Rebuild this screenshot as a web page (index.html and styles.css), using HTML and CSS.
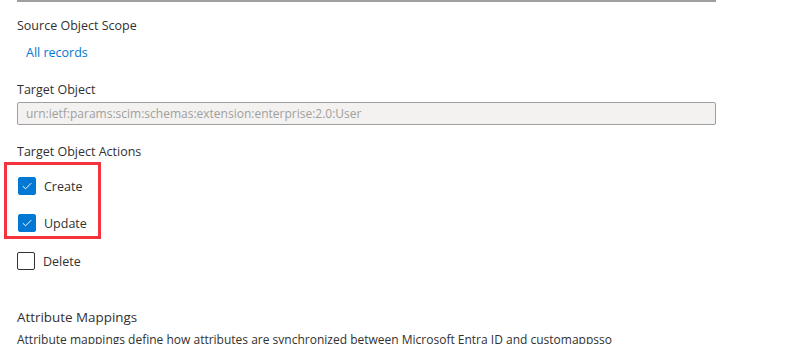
FILE: index.html
```html
<!DOCTYPE html>
<html lang="en">
<head>
    <meta charset="UTF-8">
    <meta name="viewport" content="width=device-width, initial-scale=1.0">
    <title>Edit Attribute Mapping</title>
    <link rel="stylesheet" href="styles.css">
</head>
<body>
    <div class="page">
        <div class="top-rule"></div>

        <div class="field">
            <div class="label">Source Object Scope</div>
            <a class="link" href="#">All records</a>
        </div>

        <div class="field">
            <div class="label">Target Object</div>
            <input class="text-input" type="text" value="urn:ietf:params:scim:schemas:extension:enterprise:2.0:User" disabled>
        </div>

        <div class="field actions">
            <div class="label">Target Object Actions</div>
            <div class="highlight">
                <label class="check">
                    <span class="box checked">
                        <svg width="12" height="12" viewBox="0 0 12 12"><path d="M1.8 6.2 L4.6 8.8 L10.2 3.2" fill="none" stroke="#fff" stroke-width="1"/></svg>
                    </span>
                    Create
                </label>
                <label class="check">
                    <span class="box checked">
                        <svg width="12" height="12" viewBox="0 0 12 12"><path d="M1.8 6.2 L4.6 8.8 L10.2 3.2" fill="none" stroke="#fff" stroke-width="1"/></svg>
                    </span>
                    Update
                </label>
            </div>
            <label class="check">
                <span class="box"></span>
                Delete
            </label>
        </div>

        <div class="section">
            <div class="section-title">Attribute Mappings</div>
            <p class="desc">Attribute mappings define how attributes are synchronized between Microsoft Entra ID and customappsso</p>
        </div>
    </div>
</body>
</html>
```

FILE: styles.css
```css
body {
    margin: 0;
    padding: 0;
    background: #fff;
    font-family: "Open Sans", "Noto Sans", sans-serif;
    font-size: 12.5px;
    color: #323130;
    overflow: hidden;
}
.page {
    padding: 0 17px;
}
.top-rule {
    width: 699px;
    height: 0;
    border-bottom: 2px solid #a19f9d;
}
.field {
    margin-top: 14px;
}
.field + .field {
    margin-top: 17px;
}
.field.actions {
    margin-top: 17px;
}
.label {
    line-height: 20px;
}
.link {
    display: inline-block;
    margin: 7px 0 0 9px;
    color: #0078d4;
    text-decoration: none;
    line-height: 20px;
}
.text-input {
    display: block;
    box-sizing: border-box;
    width: 699px;
    height: 23px;
    margin-top: 2px;
    padding: 0 8px;
    border: 1px solid #a19f9d;
    border-radius: 2px;
    background: #f3f2f1;
    color: #a19f9d;
    font-family: inherit;
    font-size: 12px;
}
.highlight {
    width: 80px;
    margin-left: -13px;
    padding: 11px 0 3px 11px;
    border: 3px solid #f5333f;
}
.check {
    display: flex;
    align-items: center;
    gap: 8px;
    height: 20px;
}
.check + .check {
    margin-top: 17px;
}
.highlight + .check {
    margin-top: 12px;
}
.box {
    box-sizing: border-box;
    width: 18px;
    height: 18px;
    border: 1px solid #323130;
    border-radius: 2px;
    display: flex;
    align-items: center;
    justify-content: center;
}
.box.checked {
    background: #0078d4;
    border-color: #0078d4;
}
.section {
    margin-top: 36px;
}
.section-title {
    font-size: 13.4px;
    line-height: 20px;
}
.desc {
    margin: 3px 0 0;
    font-size: 12px;
    line-height: 20px;
}
```
